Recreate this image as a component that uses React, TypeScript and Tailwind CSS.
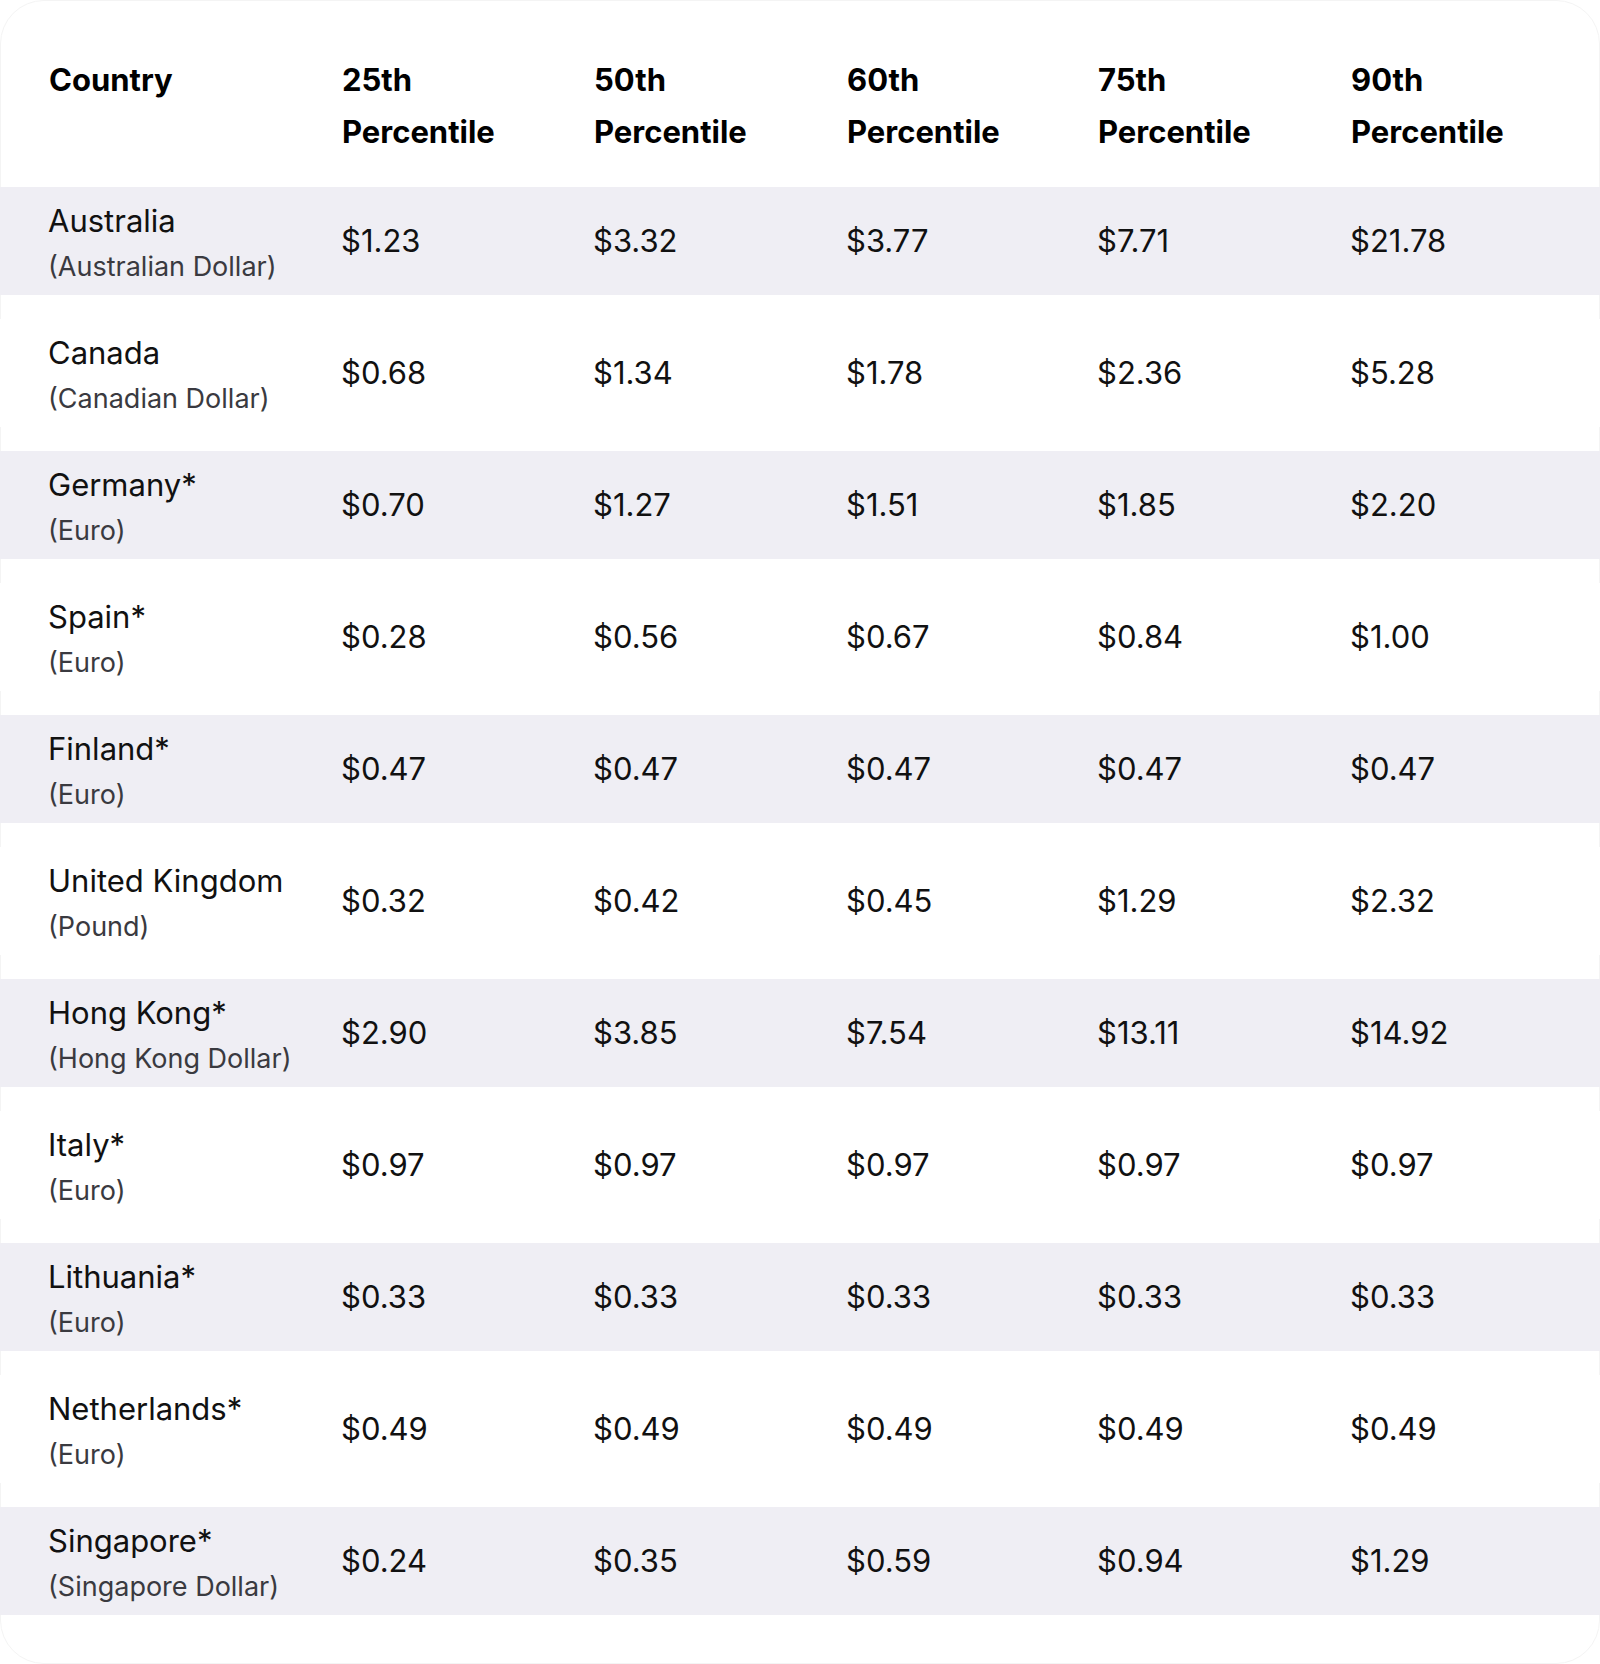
const headers = ["25th", "50th", "60th", "75th", "90th"]

interface Row {
  country: string
  currency: string
  values: string[]
}

const rows: Row[] = [
  { country: "Australia", currency: "(Australian Dollar)", values: ["$1.23", "$3.32", "$3.77", "$7.71", "$21.78"] },
  { country: "Canada", currency: "(Canadian Dollar)", values: ["$0.68", "$1.34", "$1.78", "$2.36", "$5.28"] },
  { country: "Germany*", currency: "(Euro)", values: ["$0.70", "$1.27", "$1.51", "$1.85", "$2.20"] },
  { country: "Spain*", currency: "(Euro)", values: ["$0.28", "$0.56", "$0.67", "$0.84", "$1.00"] },
  { country: "Finland*", currency: "(Euro)", values: ["$0.47", "$0.47", "$0.47", "$0.47", "$0.47"] },
  { country: "United Kingdom", currency: "(Pound)", values: ["$0.32", "$0.42", "$0.45", "$1.29", "$2.32"] },
  { country: "Hong Kong*", currency: "(Hong Kong Dollar)", values: ["$2.90", "$3.85", "$7.54", "$13.11", "$14.92"] },
  { country: "Italy*", currency: "(Euro)", values: ["$0.97", "$0.97", "$0.97", "$0.97", "$0.97"] },
  { country: "Lithuania*", currency: "(Euro)", values: ["$0.33", "$0.33", "$0.33", "$0.33", "$0.33"] },
  { country: "Netherlands*", currency: "(Euro)", values: ["$0.49", "$0.49", "$0.49", "$0.49", "$0.49"] },
  { country: "Singapore*", currency: "(Singapore Dollar)", values: ["$0.24", "$0.35", "$0.59", "$0.94", "$1.29"] },
]

const cols = "grid grid-cols-[293px_252px_253px_251px_253px_1fr] pl-12"

export default function App() {
  return (
    <div className="min-h-[1664px] w-[1600px] bg-white font-['Inter','Liberation_Sans',sans-serif]">
      <div className="h-[1664px] rounded-[44px] border border-[#f4f4f4] pt-[53px]">
        {/* header */}
        <div className={`${cols} text-[31px] font-bold leading-[52px] text-black`}>
          <div>Country</div>
          {headers.map((h) => (
            <div key={h}>
              {h}
              <br />
              Percentile
            </div>
          ))}
        </div>

        {/* body */}
        <div className="-mx-px mt-[29px] flex flex-col gap-[24px]">
          {rows.map((r, i) => (
            <div
              key={r.country}
              className={`${cols} h-[108px] items-center ${i % 2 === 0 ? "bg-[#efeef4]" : "bg-white"}`}
            >
              <div className="flex flex-col pt-[5px]">
                <span className="text-[31px] leading-[40px] text-[#111111]">{r.country}</span>
                <span className="mt-[6px] text-[27px] leading-[40px] text-[#3a3a40]">{r.currency}</span>
              </div>
              {r.values.map((v, j) => (
                <div key={j} className="text-[31px] leading-[40px] text-[#111111]">
                  {v}
                </div>
              ))}
            </div>
          ))}
        </div>
      </div>
    </div>
  )
}
